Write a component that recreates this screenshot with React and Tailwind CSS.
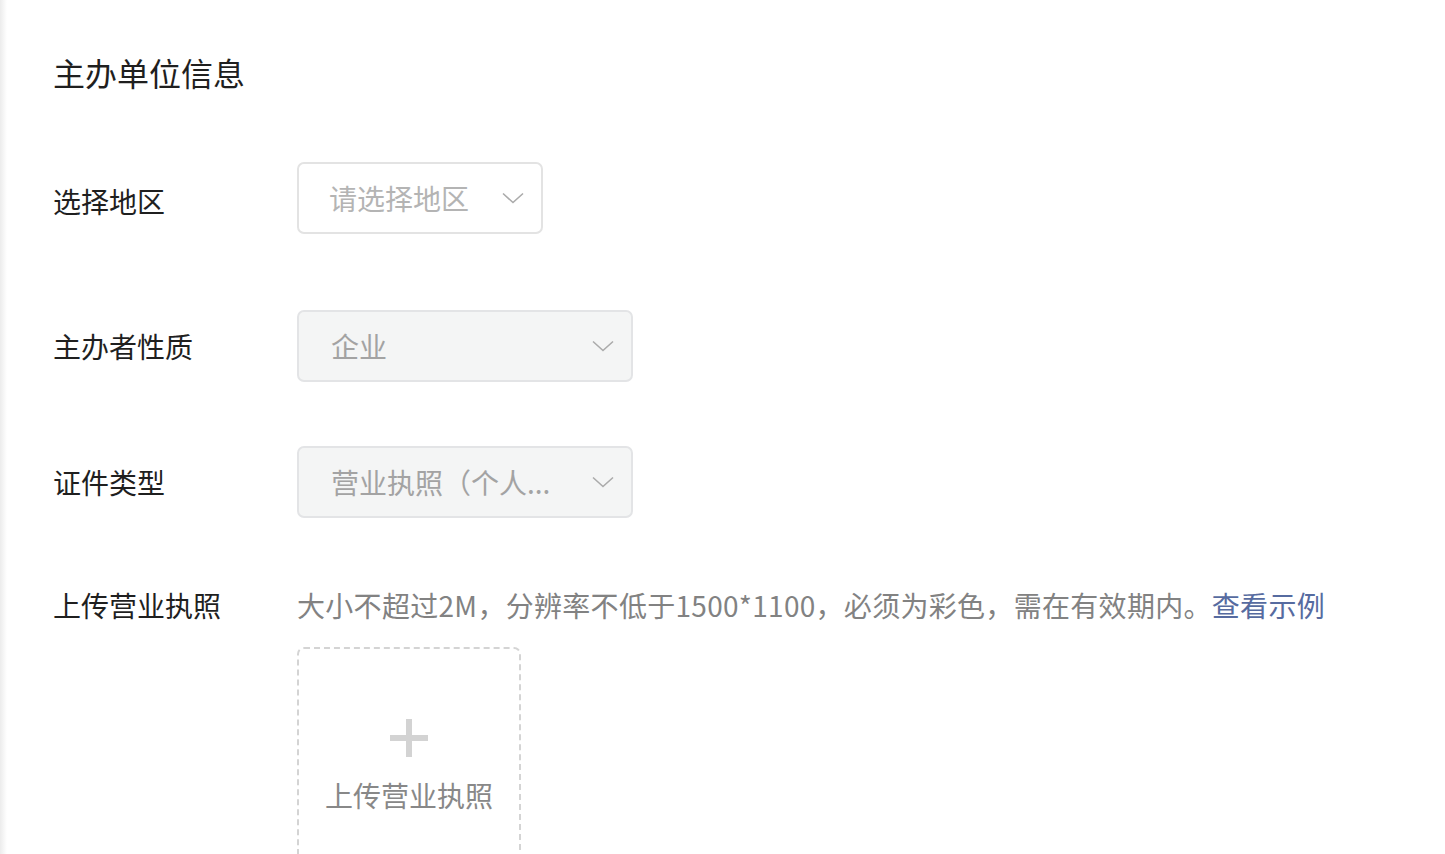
import React from "react";

const font = { fontFamily: '"Noto Sans CJK SC", "Noto Sans", sans-serif' };

function Chevron() {
  return (
    <svg width="22" height="12" viewBox="0 0 22 12" fill="none" className="shrink-0">
      <path d="M1 1.5 L11 10.5 L21 1.5" stroke="#ababab" strokeWidth="1.6" fill="none" />
    </svg>
  );
}

function Row({ label, children, className, labelClass = "" }) {
  return (
    <div className={"flex items-center " + className}>
      <div className={"w-[244px] shrink-0 text-[28px] leading-[40px] text-[#1f1f1f] " + labelClass}>{label}</div>
      {children}
    </div>
  );
}

export default function App() {
  return (
    <div className="min-h-screen w-full flex bg-white overflow-hidden" style={font}>
      <div className="w-[7px] shrink-0 self-stretch bg-gradient-to-r from-[#ececec] to-white" />
      <div className="flex-1 pl-[46px] pt-[48px]">
        <div className="text-[32px] leading-[48px] text-[#1f1f1f]">主办单位信息</div>

        <Row label="选择地区" className="mt-[66px]" labelClass="pt-[6px]">
          <div className="w-[246px] h-[72px] rounded-[7px] border-2 border-[#e3e3e3] bg-white flex items-center justify-between pl-[30px] pr-[17px]">
            <span className="text-[28px] leading-[40px] text-[#b4b4b4]">请选择地区</span>
            <Chevron />
          </div>
        </Row>

        <Row label="主办者性质" className="mt-[76px]">
          <div className="w-[336px] h-[72px] rounded-[7px] border-2 border-[#e3e4e6] bg-[#f4f5f5] flex items-center justify-between pl-[32px] pr-[17px]">
            <span className="text-[28px] leading-[40px] text-[#a3a3a3]">企业</span>
            <Chevron />
          </div>
        </Row>

        <Row label="证件类型" className="mt-[64px]">
          <div className="w-[336px] h-[72px] rounded-[7px] border-2 border-[#e3e4e6] bg-[#f4f5f5] flex items-center justify-between pl-[32px] pr-[17px]">
            <span className="text-[28px] leading-[40px] text-[#a3a3a3]">营业执照（个人...</span>
            <Chevron />
          </div>
        </Row>

        <div className="flex mt-[67px]">
          <div className="w-[244px] shrink-0 text-[28px] leading-[40px] text-[#1f1f1f]">上传营业执照</div>
          <div className="flex flex-col">
            <div className="text-[28px] leading-[40px] text-[#828282] whitespace-nowrap tracking-[0.3px]">
              大小不超过2M，分辨率不低于1500*1100，必须为彩色，需在有效期内。
              <span className="text-[#566ba0]">查看示例</span>
            </div>
            <div className="mt-[22px] w-[224px] h-[260px] rounded-[7px] border-2 border-dashed border-[#d4d4d4] flex flex-col items-center pt-[70px]">
              <svg width="38" height="38" viewBox="0 0 38 38">
                <rect x="16" y="0" width="6" height="38" fill="#d3d3d3" />
                <rect x="0" y="16" width="38" height="6" fill="#d3d3d3" />
              </svg>
              <div className="mt-[18px] text-[28px] leading-[40px] text-[#888888]">上传营业执照</div>
            </div>
          </div>
        </div>
      </div>
    </div>
  );
}
